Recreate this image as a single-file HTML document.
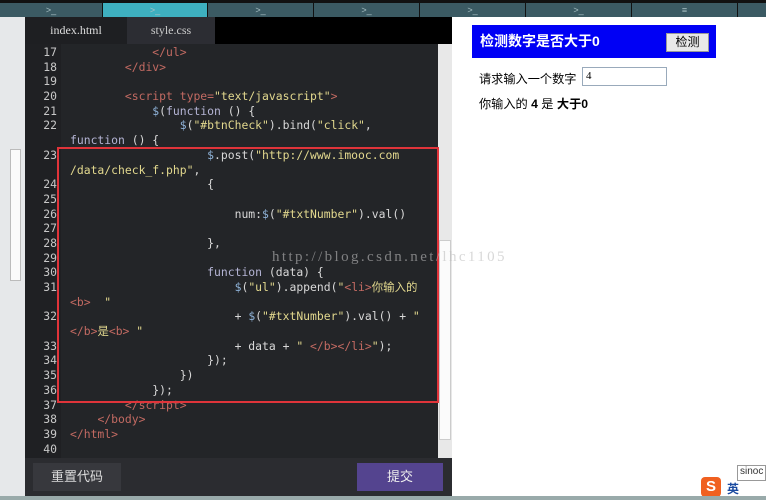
<!DOCTYPE html>
<html><head><meta charset="utf-8"><style>
*{margin:0;padding:0;box-sizing:border-box}
body{width:766px;height:500px;overflow:hidden;background:#fff;position:relative;font-family:"Liberation Sans","Noto Sans CJK SC",sans-serif}
.top{position:absolute;left:0;top:0;width:766px;height:17px;background:#111}
.tb{position:absolute;top:3px;height:14px;background:#3b5a63;font-size:9px;text-align:center;line-height:14px;color:#a8c0c4}
.left{position:absolute;left:0;top:17px;width:25px;height:483px;background:#e6e8ea}
.ed{position:absolute;left:25px;top:17px;width:427px;height:483px;background:#232528}
.tabs{position:absolute;left:25px;top:17px;width:427px;height:27px;background:#000}
.tab{position:absolute;top:0;height:27px;line-height:27px;color:#ddd;font-size:12px;text-align:center;font-family:"Liberation Serif",serif}
.gut{position:absolute;left:25px;top:44px;width:36px;height:414px;background:#1f2023}
.code{position:absolute;left:0;top:45px;width:440px;font-family:"DejaVu Sans Mono","Noto Sans CJK SC",monospace;font-size:11.4px;color:#d8d8d8}
.r{height:14.7px;line-height:14.7px;position:relative;overflow:visible;white-space:pre}
.n{position:absolute;left:25px;width:32px;text-align:right;color:#c8c8c8}
.c{position:absolute;left:70px;top:0}
.t{color:#c26a62}.s{color:#e2d88e}.d{color:#8fb3d9}.f{color:#b4b4d4}
.sb{position:absolute;left:438px;top:44px;width:14px;height:414px;background:#e8e8e8}
.bot{position:absolute;left:25px;top:458px;width:427px;height:42px;background:#2b2c30}
.red{position:absolute;left:57px;top:147px;width:382px;height:256px;border:2px solid #e0343a}
.wm{position:absolute;left:272px;top:249px;color:rgba(190,190,190,.6);font-family:"Liberation Serif",serif;font-size:15px;letter-spacing:2.4px;z-index:5;white-space:nowrap}
</style></head><body>
<div class="top"></div>
<div class="tb" style="left:0;width:102px">&gt;_</div>
<div class="tb" style="left:103px;width:104px;background:#3eb0c0">&gt;_</div>
<div class="tb" style="left:208px;width:105px">&gt;_</div>
<div class="tb" style="left:314px;width:105px">&gt;_</div>
<div class="tb" style="left:420px;width:105px">&gt;_</div>
<div class="tb" style="left:526px;width:105px">&gt;_</div>
<div class="tb" style="left:632px;width:105px">≡</div>
<div class="tb" style="left:738px;width:28px"></div>
<div class="left"><div style="position:absolute;left:10px;top:132px;width:11px;height:132px;background:#fafafa;border:1px solid #bbb"></div></div>
<div class="ed"></div>
<div class="tabs">
<div class="tab" style="left:0;width:102px;background:#1e1f22">index.html</div>
<div class="tab" style="left:102px;width:88px;background:#2c2d33;color:#ccc">style.css</div>
</div>
<div class="gut"></div>
<div class="sb"><div style="position:absolute;left:1px;top:196px;width:12px;height:200px;background:#fbfbfb;border:1px solid #ccc"></div></div>
<div class="code"><div class="r"><span class="n">17</span><span class="c">            <span class="t">&lt;/ul&gt;</span></span></div><div class="r"><span class="n">18</span><span class="c">        <span class="t">&lt;/div&gt;</span></span></div><div class="r"><span class="n">19</span></div><div class="r"><span class="n">20</span><span class="c">        <span class="t">&lt;script type=</span><span class="s">"text/javascript"</span><span class="t">&gt;</span></span></div><div class="r"><span class="n">21</span><span class="c">            <span class="d">$</span>(<span class="f">function</span> () {</span></div><div class="r"><span class="n">22</span><span class="c">                <span class="d">$</span>(<span class="s">"#btnCheck"</span>).bind(<span class="s">"click"</span>,</span></div><div class="r"><span class="c"><span class="f">function</span> () {</span></div><div class="r"><span class="n">23</span><span class="c">                    <span class="d">$</span>.post(<span class="s">"http://www.imooc.com</span></span></div><div class="r"><span class="c"><span class="s">/data/check_f.php"</span>,</span></div><div class="r"><span class="n">24</span><span class="c">                    {</span></div><div class="r"><span class="n">25</span></div><div class="r"><span class="n">26</span><span class="c">                        num:<span class="d">$</span>(<span class="s">"#txtNumber"</span>).val()</span></div><div class="r"><span class="n">27</span></div><div class="r"><span class="n">28</span><span class="c">                    },</span></div><div class="r"><span class="n">29</span></div><div class="r"><span class="n">30</span><span class="c">                    <span class="f">function</span> (data) {</span></div><div class="r"><span class="n">31</span><span class="c">                        <span class="d">$</span>(<span class="s">"ul"</span>).append(<span class="s">"<span class="t">&lt;li&gt;</span>你输入的</span></span></div><div class="r"><span class="c"><span class="s"><span class="t">&lt;b&gt;</span>  "</span></span></div><div class="r"><span class="n">32</span><span class="c">                        + <span class="d">$</span>(<span class="s">"#txtNumber"</span>).val() + <span class="s">"</span></span></div><div class="r"><span class="c"><span class="s"><span class="t">&lt;/b&gt;</span>是<span class="t">&lt;b&gt;</span> "</span></span></div><div class="r"><span class="n">33</span><span class="c">                        + data + <span class="s">" <span class="t">&lt;/b&gt;&lt;/li&gt;</span>"</span>);</span></div><div class="r"><span class="n">34</span><span class="c">                    });</span></div><div class="r"><span class="n">35</span><span class="c">                })</span></div><div class="r"><span class="n">36</span><span class="c">            });</span></div><div class="r"><span class="n">37</span><span class="c">        <span class="t">&lt;/script&gt;</span></span></div><div class="r"><span class="n">38</span><span class="c">    <span class="t">&lt;/body&gt;</span></span></div><div class="r"><span class="n">39</span><span class="c"><span class="t">&lt;/html&gt;</span></span></div><div class="r"><span class="n">40</span></div></div>
<div class="red"></div>
<div class="wm">http://blog.csdn.net/lhc1105</div>
<div class="bot">
<div style="position:absolute;left:8px;top:5px;width:88px;height:28px;background:#37383d;color:#ddd;font-size:13px;line-height:28px;text-align:center">重置代码</div>
<div style="position:absolute;left:332px;top:5px;width:86px;height:28px;background:#54448f;color:#eee;font-size:13px;line-height:28px;text-align:center">提交</div>
</div>
<div style="position:absolute;left:472px;top:25px;width:244px;height:33px;background:#0000f5;color:#fff;font-weight:bold;font-size:14px;line-height:33px;padding-left:8px">检测数字是否大于0
<div style="position:absolute;left:194px;top:8px;width:43px;height:19px;background:#e8e8e8;border:1px solid #999;color:#000;font-weight:normal;font-size:12px;line-height:17px;text-align:center">检测</div></div>
<div style="position:absolute;left:479px;top:69px;font-size:12.2px;color:#000">请求输入一个数字</div>
<div style="position:absolute;left:582px;top:67px;width:85px;height:19px;border:1px solid #9ab;font-size:11px;line-height:17px;padding-left:3px;font-family:'Liberation Serif',serif">4</div>
<div style="position:absolute;left:479px;top:94px;font-size:12.2px;color:#000">你输入的 <b>4</b> 是 <b>大于0</b></div>
<div style="position:absolute;left:737px;top:465px;width:29px;height:16px;border:1px solid #999;font-size:10px;color:#333;padding-left:2px;background:#fff">sinoc</div>
<div style="position:absolute;left:701px;top:477px;width:20px;height:20px;background:#f06020;color:#fff;font-weight:bold;font-size:15px;text-align:center;line-height:20px;border-radius:4px">S</div>
<div style="position:absolute;left:727px;top:480px;font-size:12px;color:#1a4aa0;font-weight:bold">英</div>
<div style="position:absolute;left:0;top:496px;width:766px;height:4px;background:#9aa"></div>
</body></html>
